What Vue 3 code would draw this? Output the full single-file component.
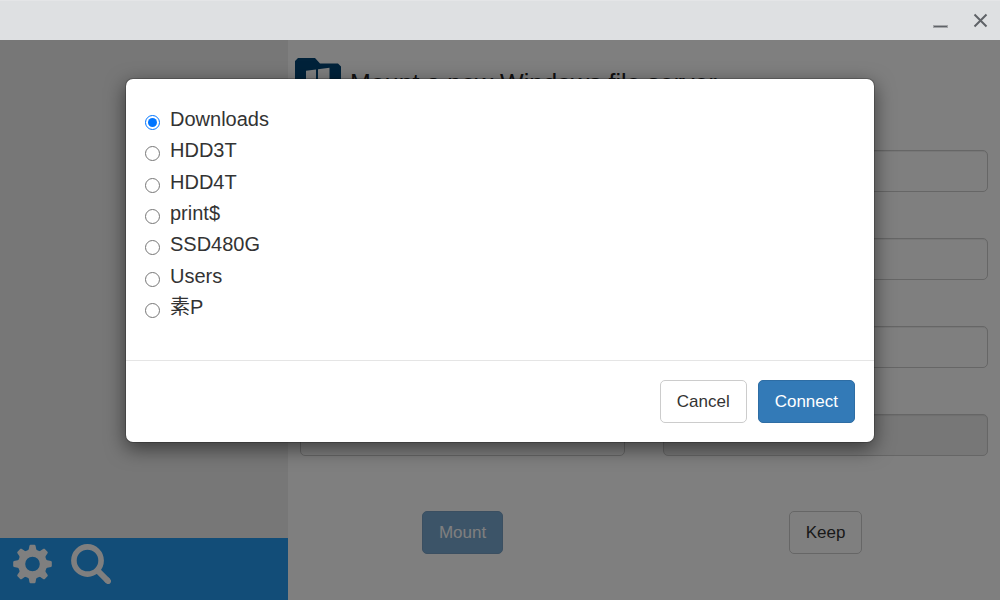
<script setup>
import { ref } from 'vue'

const shares = ['Downloads', 'HDD3T', 'HDD4T', 'print$', 'SSD480G', 'Users', '素P']
const selected = ref('Downloads')

const fields = [
  { id: 'server', name: 'Server' },
  { id: 'path', name: 'Share path' },
  { id: 'domain', name: 'Domain' },
  { id: 'user', name: 'User name' },
  { id: 'password', name: 'Password', type: 'password' },
  { id: 'display', name: 'Display name' },
  { id: 'options', name: 'Options' },
  { id: 'version', name: 'Protocol', disabled: true },
]
const teeth = [0, 45, 90, 135, 180, 225, 270, 315]
</script>

<template>
  <div class="window">
    <header class="titlebar">
      <button type="button" class="win-btn" aria-label="Minimize">
        <svg width="16" height="16" viewBox="0 0 16 16"><path d="M1 14.500h15" stroke="#a4a6a9" stroke-width="3" /><path d="M2 14.500h13" stroke="#5f6368" stroke-width="1" /></svg>
      </button>
      <button type="button" class="win-btn" aria-label="Close">
        <svg width="16" height="16" viewBox="0 0 16 16"><path d="M2.500 2.500l12 12M14.500 2.500l-12 12" stroke="#5f6368" stroke-width="2" /></svg>
      </button>
    </header>

    <div class="content">
      <aside class="sidebar">
        <nav class="tools">
          <button type="button" class="tool" aria-label="Settings">
            <svg width="40" height="40" viewBox="-19.500 -20 40 40">
              <path fill="#fff" fill-rule="evenodd" d="M0-14.500A14.500 14.500 0 1 1 0 14.500A14.500 14.500 0 1 1 0-14.500ZM0-7.300A7.300 7.300 0 1 0 0 7.300A7.300 7.300 0 1 0 0-7.300Z" />
              <path v-for="a in teeth" :key="a" fill="#fff" :transform="`rotate(${a})`" d="M-5-12.500Q-3.500-14-3-18.500L-2.200-19.300H2.200L3-18.500Q3.500-14 5-12.500Z" />
            </svg>
          </button>
          <button type="button" class="tool" aria-label="Search">
            <svg width="40" height="40" viewBox="0 0 40 40">
              <circle cx="16.500" cy="16.500" r="13.600" fill="none" stroke="#fff" stroke-width="5.600" />
              <path d="M26 26l11 11" stroke="#fff" stroke-width="6" />
              <path d="M36 36l1.200 1.200" stroke="#fff" stroke-width="5.600" stroke-linecap="round" />
            </svg>
          </button>
        </nav>
      </aside>

      <main class="main">
        <h1 class="heading">
          <svg class="folder" width="46" height="46" viewBox="0 0 46 46" aria-hidden="true">
            <path fill="#034474" d="M0 3L3 0H20L25 5.500H43L46 8.500V40L43 43H3L0 40Z" />
            <path fill="#fff" d="M11 12.700L21 11.400V21H11ZM23 11.200L34.500 9.700V21H23ZM11 23H21V33L11 31.700ZM23 23H34.500V35L23 33.400Z" />
          </svg>
          <span>Mount a new Windows file server</span>
        </h1>
        <form class="form" @submit.prevent>
          <input
            v-for="f in fields"
            :key="f.id"
            class="field"
            :type="f.type || 'text'"
            :aria-label="f.name"
            :disabled="f.disabled"
          />
          <div class="action"><button type="button" class="btn primary" disabled>Mount</button></div>
          <div class="action"><button type="button" class="btn">Keep</button></div>
        </form>
      </main>

      <div class="backdrop">
        <section class="modal" role="dialog" aria-modal="true" aria-label="Shared resources">
          <div class="modal-body">
            <label v-for="s in shares" :key="s" class="share">
              <input v-model="selected" type="radio" name="share" :value="s" />
              <span>{{ s }}</span>
            </label>
          </div>
          <footer class="modal-footer">
            <button type="button" class="btn">Cancel</button>
            <button type="button" class="btn primary">Connect</button>
          </footer>
        </section>
      </div>
    </div>
  </div>
</template>

<style>
body {
  margin: 0;
}
</style>

<style scoped>
.window {
  display: flex;
  flex-direction: column;
  height: 100vh;
  overflow: hidden;
  color: #333;
  font-family: "Liberation Sans", "Noto Sans CJK JP", sans-serif;
}
.window * {
  box-sizing: border-box;
}
svg {
  display: block;
}
button {
  font-family: inherit;
}
.titlebar {
  display: flex;
  flex: none;
  justify-content: flex-end;
  align-items: center;
  height: 40px;
  padding-right: 8px;
  background: #dee0e2;
  box-shadow: inset 0 1px 0 #e4e5e7;
}
.win-btn {
  width: 24px;
  height: 24px;
  margin-left: 16px;
  padding: 4px;
  border: 0;
  background: none;
}
.content {
  position: relative;
  display: flex;
  flex: 1;
  min-height: 0;
}
.sidebar {
  display: flex;
  flex: none;
  flex-direction: column;
  justify-content: flex-end;
  width: 288px;
  background: #eee;
}
.tools {
  display: flex;
  gap: 18px;
  height: 62px;
  padding: 6px 13px;
  background: #249bf1;
}
.tool {
  height: 40px;
  padding: 0;
  border: 0;
  background: none;
}
.main {
  flex: 1;
  padding: 18px 12px 0;
  background: #fff;
}
.heading {
  display: flex;
  align-items: flex-end;
  gap: 9px;
  height: 46px;
  margin: 0 0 46px -5px;
  font-size: 25px;
  font-weight: 400;
  line-height: 42px;
  color: #222;
}
.form {
  display: grid;
  grid-template-columns: 1fr 1fr;
  column-gap: 38px;
  row-gap: 46px;
}
.field {
  width: 100%;
  height: 42px;
  padding: 0 15px;
  border: 1px solid #ccc;
  border-radius: 5px;
  background: #fff;
  box-shadow: inset 0 1px 1px rgba(0, 0, 0, 0.075);
  font-size: 17px;
}
.field:disabled {
  background: #eee;
}
.action {
  display: flex;
  justify-content: center;
  padding-top: 9px;
}
.btn {
  height: 43px;
  padding: 0 16px;
  border: 1px solid #ccc;
  border-radius: 5px;
  background: #fff;
  color: #333;
  font-size: 17px;
}
.btn.primary {
  border-color: #2e6da4;
  background: #337ab7;
  color: #fff;
}
.btn:disabled {
  opacity: 0.65;
}
.backdrop {
  position: absolute;
  inset: 0;
  padding: 38px 20px;
  background: rgba(0, 0, 0, 0.5);
}
.modal {
  max-width: 750px;
  margin: 0 auto;
  border: 1px solid rgba(0, 0, 0, 0.2);
  border-radius: 8px;
  background: #fff;
  background-clip: padding-box;
  box-shadow: 0 6px 19px rgba(0, 0, 0, 0.5);
}
.modal-body {
  display: grid;
  min-height: 281px;
  padding: 24px 19px 37px;
}
.share {
  display: flex;
  align-items: center;
  gap: 10px;
  font-size: 20px;
  line-height: 30px;
}
.share input {
  width: 15px;
  height: 15px;
  margin: 7px 0 0;
}
.modal-footer {
  display: flex;
  justify-content: flex-end;
  gap: 11px;
  padding: 19px;
  border-top: 1px solid #e5e5e5;
}
</style>
